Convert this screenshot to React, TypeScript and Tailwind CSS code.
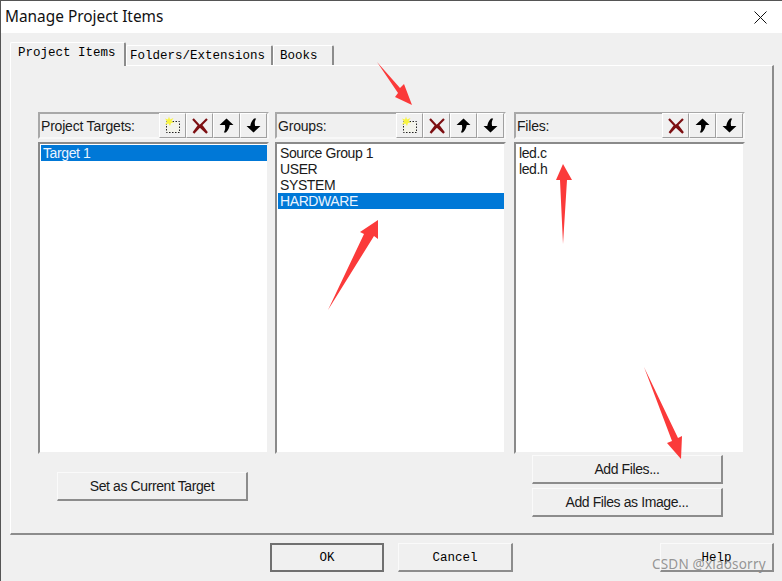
import React from "react";

const ui = "font-['Liberation_Sans',sans-serif] text-[14px] text-[#1a1a1a] tracking-[-0.2px]";
const tight = "font-['Liberation_Sans',sans-serif] text-[14px] text-[#1a1a1a] tracking-[-0.4px]";
const mono = "font-['Liberation_Mono',monospace] text-[12.5px] text-black font-medium";

function NewIcon() {
  return (
    <svg width="20" height="20" viewBox="0 0 20 20">
      <rect x="3.5" y="5.5" width="13" height="11" fill="#f4f4ec" stroke="#222" strokeDasharray="1.5 1.5" />
      <path d="M6 0.5 L7 3.5 L10.5 2 L8.5 5 L11 6.5 L8 7 L7 10 L5.5 7.5 L2 8.5 L4 5.5 L2 2.5 L5 3.5 Z" fill="#f8f440" />
    </svg>
  );
}
function DelIcon() {
  return (
    <svg width="18" height="18" viewBox="0 0 18 18">
      <path d="M2 2 L8 8.5 L2.5 16 M16 2 L10 8 L16 16 M8 8.5 L16 16 M10 8 L2.5 16" stroke="#7d0f12" strokeWidth="2.2" fill="none" />
    </svg>
  );
}
function UpIcon() {
  return (
    <svg width="15" height="15" viewBox="0 0 14 14">
      <path d="M7 0.5 L13.5 6.5 L10 6.5 C9.5 9 9 11 6.5 13.5 L4.5 13.5 C6 11 6 9 5.5 6.5 L0.5 6.5 Z" fill="#000" />
    </svg>
  );
}
function DownIcon() {
  return (
    <svg width="15" height="15" viewBox="0 0 14 14">
      <path d="M7 13.5 L0.5 7.5 L4 7.5 C4.5 5 5 3 7.5 0.5 L9.5 0.5 C8 3 8 5 8.5 7.5 L13.5 7.5 Z" fill="#000" />
    </svg>
  );
}

function ToolBtn({ children }: { children: React.ReactNode }) {
  return (
    <div className="w-[27px] h-[25px] flex items-center justify-center border-t border-l border-t-white border-l-white border-r border-b border-r-[#a0a0a0] border-b-[#a0a0a0] bg-[#f0f0f0]">
      {children}
    </div>
  );
}

function Column({ title, hasNew, children, className }: { title: string; hasNew: boolean; children: React.ReactNode; className?: string }) {
  return (
    <div className={"w-[231px] flex flex-col " + (className ?? "")}>
      <div className="h-[27px] flex items-center justify-between border-2 border-t-[#a8a8a8] border-l-[#a8a8a8] border-r-[#f8f8f8] border-b-[#f8f8f8] pl-[1px]">
        <span className={ui + " pt-[1px]"}>{title}</span>
        <div className="flex">
          {hasNew && <ToolBtn><NewIcon /></ToolBtn>}
          <ToolBtn><DelIcon /></ToolBtn>
          <ToolBtn><UpIcon /></ToolBtn>
          <ToolBtn><DownIcon /></ToolBtn>
        </div>
      </div>
      <div className="mt-[3px] h-[312px] bg-white border-2 border-t-[#8a8a8a] border-l-[#8a8a8a] border-r-[#f0f0f0] border-b-[#f0f0f0] pl-[1px] pt-[1px]">
        {children}
      </div>
    </div>
  );
}

function Row({ children, selected }: { children: React.ReactNode; selected?: boolean }) {
  return (
    <div className={"h-[16px] leading-[16px] pl-[2px] " + tight + (selected ? " bg-[#0078d7] !text-[#eaf4ff]" : "")}>
      {children}
    </div>
  );
}

function Btn({ children, className, monoFont }: { children: React.ReactNode; className?: string; monoFont?: boolean }) {
  return (
    <div className={"h-[29px] flex items-center justify-center bg-[#f0f0f0] border-t border-l border-t-[#fafafa] border-l-[#fafafa] border-r-2 border-b-2 border-r-[#8c8c8c] border-b-[#8c8c8c] " + (monoFont ? mono + " pt-[2px]" : tight) + " " + (className ?? "")}>
      {children}
    </div>
  );
}

function Tab({ children, active, w, pad }: { children: React.ReactNode; active?: boolean; w: string; pad: string }) {
  return (
    <div className={w + " " + pad + " flex items-center border-t border-l border-t-white border-l-white border-r-2 border-r-[#8c8c8c] bg-[#f0f0f0] rounded-t-[2px] " + mono + (active ? " h-[24px] -mb-[1px] pb-[2px] relative z-10" : " h-[20px] pt-[1px]")}>
      {children}
    </div>
  );
}

export default function App() {
  return (
    <div className="relative w-[782px] h-[581px] overflow-hidden bg-[#f0f0f0] border-t border-l border-t-[#555] border-l-[#555] flex flex-col">
      <div className="h-[32px] bg-white flex items-center justify-between pl-[4px] pr-[15px] shrink-0">
        <span className="font-['Noto_Sans',sans-serif] text-[15.4px] text-[#111]">Manage Project Items</span>
        <svg width="13" height="13" viewBox="0 0 13 13">
          <path d="M0.5 0.5 L12.5 12.5 M12.5 0.5 L0.5 12.5" stroke="#111" strokeWidth="1" fill="none" />
        </svg>
      </div>

      <div className="ml-[9px] mt-[9px] w-[764px]">
        <div className="flex items-end h-[23px]">
          <Tab active w="w-[116px]" pad="pl-[7px]">Project Items</Tab>
          <Tab w="w-[147px]" pad="pl-[3px]">Folders/Extensions</Tab>
          <Tab w="w-[61px]" pad="pl-[6px]">Books</Tab>
        </div>
        <div className="h-[470px] border-t border-l border-t-white border-l-white border-r-2 border-b-2 border-r-[#8c8c8c] border-b-[#8c8c8c] pl-[27px] pt-[46px]">
          <div className="flex">
            <Column title="Project Targets:" hasNew>
              <Row selected>Target 1</Row>
            </Column>
            <Column title="Groups:" hasNew className="ml-[6px]">
              <Row>Source Group 1</Row>
              <Row>USER</Row>
              <Row>SYSTEM</Row>
              <Row selected>HARDWARE</Row>
            </Column>
            <Column title="Files:" hasNew={false} className="ml-[8px]">
              <Row>led.c</Row>
              <Row>led.h</Row>
            </Column>
          </div>
          <div className="flex mt-[1px]">
            <Btn className="w-[191px] ml-[19px] mt-[17px]">Set as Current Target</Btn>
            <div className="ml-[284px] flex flex-col gap-[4px]">
              <Btn className="w-[191px]">Add Files...</Btn>
              <Btn className="w-[191px]">Add Files as Image...</Btn>
            </div>
          </div>
        </div>
      </div>

      <div className="flex ml-[269px] mt-[8px]">
        <Btn monoFont className="w-[114px] border-t-2 border-l-2 !border-t-[#707070] !border-l-[#707070] !border-r-[#707070] !border-b-[#707070]">OK</Btn>
        <Btn monoFont className="w-[115px] ml-[14px]">Cancel</Btn>
        <Btn monoFont className="w-[114px] ml-[147px]">Help</Btn>
      </div>

      {/* red annotation arrows */}
      <svg className="absolute left-[-1px] top-[-1px] pointer-events-none" width="782" height="581" viewBox="0 0 782 581">
        <g fill="#fb3a3a">
          <path d="M377 62 L400 88 L404 84 L412 105 L395 97 L398 93 Z" />
          <path d="M328 310 L364 234 L360 232 L378 220 L378 239 L374 236 Z" />
          <path d="M563 244 L560 180 L556 180 L563 164 L572 180 L567 180 Z" />
          <path d="M644 367 L672 441 L667 443 L681 459 L682 436 L678 438 Z" />
        </g>
      </svg>

      <div className="absolute left-[651px] top-[553px] font-['Noto_Sans',sans-serif] text-[13.5px] text-[#8a8a8a]/90 tracking-[0.2px] whitespace-nowrap">
        CSDN @xiaosorry
      </div>
    </div>
  );
}
